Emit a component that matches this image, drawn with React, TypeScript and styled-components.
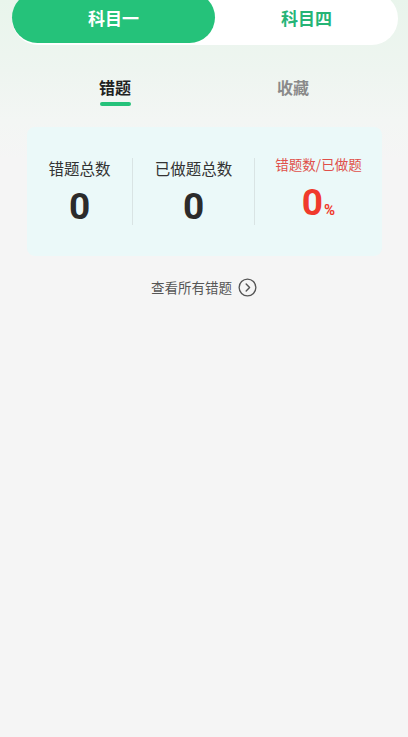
import styled, { createGlobalStyle } from "styled-components"

const GlobalStyle = createGlobalStyle`
  html, body {
    margin: 0;
    padding: 0;
    background: #f5f5f5;
    font-family: "Noto Sans CJK SC", "Noto Sans", sans-serif;
  }
`

const Page = styled.div`
  min-height: 737px;
  background: linear-gradient(180deg, #e9f5ec 0px, #eef5f0 70px, #f3f6f4 120px, #f5f5f5 160px);
  overflow: hidden;
`

const Switcher = styled.div`
  margin: -8px 10px 0 12px;
  height: 53px;
  border-radius: 27px;
  background: #fff;
  display: flex;
`

const SwitchItem = styled.div<{ $active?: boolean }>`
  width: 203px;
  height: 51px;
  border-radius: 26px;
  display: flex;
  align-items: center;
  justify-content: center;
  font-size: 17px;
  font-weight: 700;
  background: ${(p) => (p.$active ? "#25c27a" : "transparent")};
  color: ${(p) => (p.$active ? "#fff" : "#25b476")};
  flex: ${(p) => (p.$active ? "none" : "1")};
`

const Tabs = styled.div`
  display: flex;
  margin: 31px 26px 0 26px;
`

const Tab = styled.div<{ $active?: boolean }>`
  flex: 1;
  display: flex;
  flex-direction: column;
  align-items: center;
  font-size: 16px;
  font-weight: 700;
  line-height: 22px;
  color: ${(p) => (p.$active ? "#222" : "#8a8a8a")};
`

const Underline = styled.div<{ $show?: boolean }>`
  margin-top: 4px;
  width: 31px;
  height: 4px;
  border-radius: 2px;
  background: ${(p) => (p.$show ? "#25c27a" : "transparent")};
`

const Card = styled.div`
  margin: 21px 26px 0 27px;
  height: 129px;
  border-radius: 8px;
  background: #ebf9f9;
  display: flex;
  align-items: center;
`

const Stat = styled.div<{ $w: number }>`
  width: ${(p) => p.$w}px;
  display: flex;
  flex-direction: column;
  align-items: center;
`

const Divider = styled.div`
  width: 1px;
  height: 67px;
  background: #d9e4e4;
`

const Label = styled.div<{ $red?: boolean }>`
  font-size: ${(p) => (p.$red ? "13.5px" : "15.5px")};
  line-height: 22px;
  color: ${(p) => (p.$red ? "#e0504a" : "#333")};
`

const Value = styled.div<{ $red?: boolean }>`
  margin-top: 8px;
  font-family: Roboto, "Liberation Sans", sans-serif;
  font-size: 37px;
  font-weight: 700;
  line-height: 40px;
  color: ${(p) => (p.$red ? "#f03a2c" : "#2b2b2b")};
`

const Unit = styled.span`
  font-size: 15px;
  margin-left: 1px;
`

const MoreLink = styled.div`
  margin-top: 21px;
  display: flex;
  justify-content: center;
  align-items: center;
  gap: 6px;
  font-size: 13.5px;
  color: #555;
`

const ArrowIcon = () => (
  <svg width="19" height="19" viewBox="0 0 20 20" fill="none">
    <circle cx="10" cy="10" r="8.8" stroke="#555" strokeWidth="1.4" />
    <path d="M8.6 6.3 L12.2 10 L8.6 13.7" stroke="#555" strokeWidth="1.5" strokeLinecap="round" strokeLinejoin="round" />
  </svg>
)

export default function App() {
  return (
    <Page>
      <GlobalStyle />
      <Switcher>
        <SwitchItem $active>科目一</SwitchItem>
        <SwitchItem>科目四</SwitchItem>
      </Switcher>

      <Tabs>
        <Tab $active>
          错题
          <Underline $show />
        </Tab>
        <Tab>
          收藏
          <Underline />
        </Tab>
      </Tabs>

      <Card>
        <Stat $w={105}>
          <Label>错题总数</Label>
          <Value>0</Value>
        </Stat>
        <Divider />
        <Stat $w={121}>
          <Label>已做题总数</Label>
          <Value>0</Value>
        </Stat>
        <Divider />
        <Stat $w={127}>
          <Label $red>错题数/已做题</Label>
          <Value $red>
            0<Unit>%</Unit>
          </Value>
        </Stat>
      </Card>

      <MoreLink>
        查看所有错题
        <ArrowIcon />
      </MoreLink>
    </Page>
  )
}
